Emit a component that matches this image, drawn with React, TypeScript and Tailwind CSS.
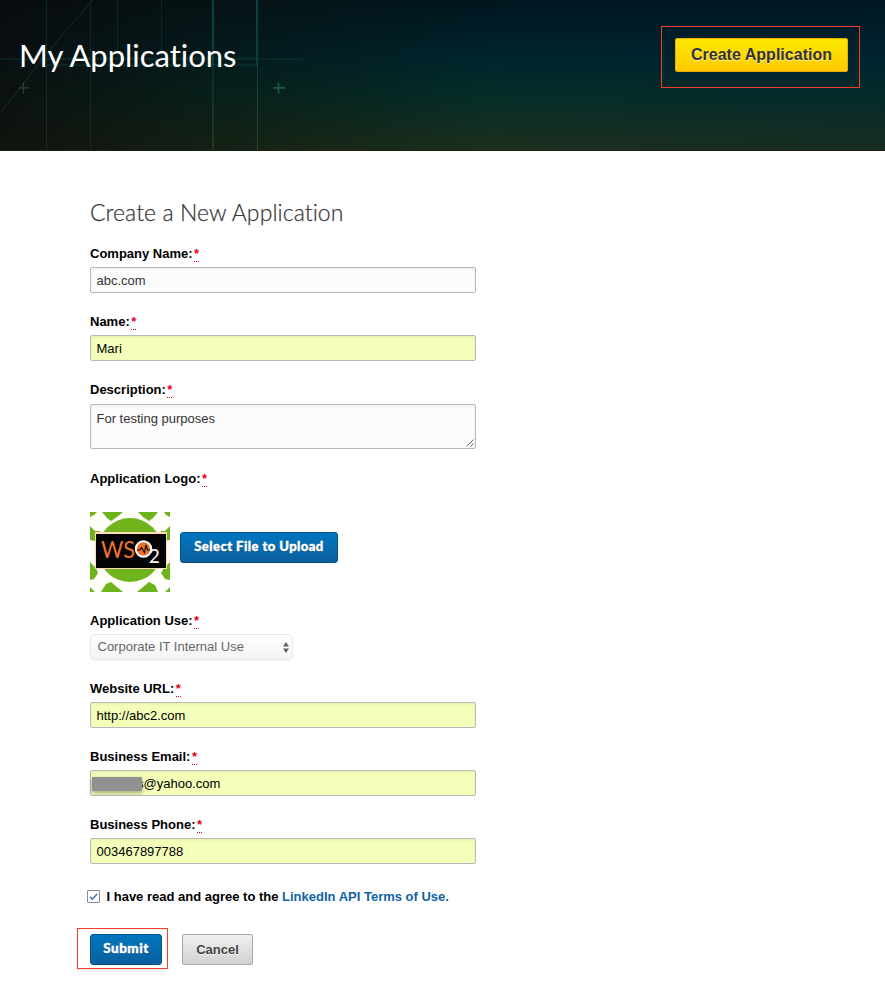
import type { ReactNode } from "react";

function HeaderArt() {
  return (
    <svg className="absolute inset-0 h-full w-full" viewBox="0 0 885 151" preserveAspectRatio="none" aria-hidden="true">
      <defs>
        <linearGradient id="rule" x1="0" y1="0" x2="0" y2="151" gradientUnits="userSpaceOnUse">
          <stop offset="0" stopColor="#064248" />
          <stop offset="0.45" stopColor="#0b4038" />
          <stop offset="1" stopColor="#264a2a" />
        </linearGradient>
        <linearGradient id="dim" x1="0" y1="0" x2="0" y2="151" gradientUnits="userSpaceOnUse">
          <stop offset="0" stopColor="#06272c" />
          <stop offset="1" stopColor="#1b2a1d" />
        </linearGradient>
      </defs>
      <g fill="url(#dim)">
        <rect x="46" y="0" width="1" height="151" />
        <rect x="90" y="0" width="1" height="151" />
        <rect x="117" y="0" width="1" height="60" />
        <rect x="161" y="0" width="1" height="60" />
      </g>
      <g fill="url(#rule)">
        <rect x="212" y="0" width="2" height="66" />
        <rect x="212" y="66" width="2" height="85" opacity="0.55" />
        <rect x="256" y="0" width="2" height="66" />
        <rect x="257" y="66" width="1" height="85" />
      </g>
      <rect x="0" y="59" width="302" height="1" fill="#0b3c38" opacity="0.8" />
      <rect x="46" y="58" width="212" height="1" fill="#0b4a42" opacity="0.45" />
      <rect x="46" y="65" width="212" height="1" fill="#0e423a" opacity="0.8" />
      <path d="M93 0 L53 46 L0 114" fill="none" stroke="#182c2a" strokeWidth="1" />
      <path d="M19 88.500H29M23.500 83V94" stroke="#23443a" strokeWidth="1.300" />
      <path d="M273.500 88.500H285M278.500 83V94" stroke="#1c5c48" strokeWidth="1.700" />
    </svg>
  );
}

function Label({ children }: { children: ReactNode }) {
  return (
    <div className="flex h-5 items-center whitespace-nowrap text-[13px] font-bold leading-5 text-black">
      <span>{children}</span>
      <span className="ml-[1.500px] h-[15px] border-b border-dotted border-[#e1001a] leading-[14px] text-[#e1001a]">*</span>
    </div>
  );
}

function TextField({ label, value, filled = false, masked = false }: { label: string; value: string; filled?: boolean; masked?: boolean }) {
  return (
    <div className="mb-[19px]">
      <Label>{label}</Label>
      <div
        className={`relative mt-[3px] flex h-[26px] items-center rounded-[2px] border border-[#b9b9b9] pl-[5.500px] pt-px text-[13px] shadow-[inset_0_1px_3px_rgba(0,0,0,0.07)] ${
          filled ? "bg-[#f4ffba] text-black" : "bg-[#fcfcfc] text-[#333]"
        }`}
      >
        {masked && <span className="absolute left-px top-[6px] h-[14px] w-[50px] bg-[#919191] shadow-[0_2px_4px_rgba(0,0,0,0.35)]" />}
        <span className={masked ? "ml-[40.500px]" : ""}>{value}</span>
      </div>
    </div>
  );
}

function AppLogo() {
  return (
    <svg className="h-20 w-20 shrink-0" viewBox="0 0 80 80" role="img" aria-label="WSO2">
      <rect width="80" height="80" fill="#fffef8" />
      <g fill="#6fb41c">
        <path d="M0 0H7L4 3L0 5Z M12 0H33L27 5L21 9L17 6Z M48 0H68L63 6L59 9L53 5Z M74 0H80V5L76 3Z" />
        <path d="M0 14L5 19L10 19V27L5 29L0 28Z M80 14L75 19H71V27L75 29L80 28Z" />
        <path d="M0 50L6 56L8 61L4 67L0 68Z M80 50L74 56L71 61L75 67L80 68Z" />
        <path d="M0 75L5 80H0Z M11 80L16 72L21 70L27 75L33 80Z M47 80L53 75L59 70L65 73L68 80Z M75 80L80 75V80Z" />
        <circle cx="40" cy="38" r="32" />
      </g>
      <rect x="5" y="20" width="72" height="37" fill="#ffd9b8" />
      <rect x="6" y="22" width="70" height="34" fill="#050304" />
      <text x="11" y="45.500" textLength="34" lengthAdjust="spacingAndGlyphs" className="fill-[#ed7430] font-['Lato',sans-serif] text-[24px]">WS</text>
      <circle cx="53.500" cy="37" r="7.700" fill="#e9712d" stroke="#fff" strokeWidth="2" />
      <path d="M47 38H50L51.500 35.500L54.500 40.500L56 33L57.500 38H60" fill="none" stroke="#161010" strokeWidth="1.200" />
      <text x="58.800" y="50.500" className="fill-white font-['Lato',sans-serif] text-[19px]">2</text>
    </svg>
  );
}

const blueButton =
  "flex h-[31px] items-center justify-center whitespace-nowrap rounded-[3px] border border-[#045188] bg-linear-to-b from-[#0077bf] to-[#0b5f9e] font-['Lato',sans-serif] font-black text-white [-webkit-text-stroke:0.4px_white] [text-shadow:0_1px_1px_rgba(0,0,0,0.3)]";

export default function App() {
  return (
    <div className="min-h-[986px] w-full bg-white font-['Liberation_Sans',Arial,sans-serif]">
      <header className="relative h-[151px] overflow-hidden border-b border-[#152018] bg-[linear-gradient(90deg,rgba(12,9,8,0.78)_0%,rgba(10,14,8,0.5)_24%,rgba(0,20,20,0.12)_55%,rgba(0,26,42,0.25)_100%),linear-gradient(180deg,#001620_0%,#002630_38%,#06302b_63%,#20331f_100%)]">
        <HeaderArt />
        <div className="relative flex items-start justify-between">
          <h1 className="ml-[19px] mt-[35px] whitespace-nowrap font-['Lato',sans-serif] text-[31px] font-normal leading-10 tracking-[-0.03px] text-white">
            My Applications
          </h1>
          <div className="mr-[25px] mt-[26px] flex h-[62px] w-[199px] items-start border border-[#f43d2b] pl-[13px] pt-[11px]">
            <button className="h-[34px] w-[173px] whitespace-nowrap rounded-[2px] border border-[#f2ac00] bg-linear-to-b from-[#fbe900] to-[#ffca00] text-[16px] font-bold leading-8 tracking-[0.02px] text-[#333] [text-shadow:0_1px_1px_rgba(255,255,255,0.65)]">
              Create Application
            </button>
          </div>
        </div>
      </header>

      <main className="ml-[90px] w-[386px] pt-[46px]">
        <h2 className="h-[47px] whitespace-nowrap font-['Lato',sans-serif] text-[23px] font-light leading-[30px] tracking-[0.07px] text-[#333] [-webkit-text-stroke:0.25px_#444]">
          Create a New Application
        </h2>
        <TextField label="Company Name:" value="abc.com" />
        <TextField label="Name:" value="Mari" filled />
        <Label>Description:</Label>
        <div className="relative mb-5 mt-1 h-[45px] rounded-[2px] border border-[#b9b9b9] bg-[#fcfcfc] pl-[5.500px] pt-1 text-[13px] leading-5 text-[#333] shadow-[inset_0_1px_3px_rgba(0,0,0,0.07)]">
          For testing purposes
          <svg className="absolute bottom-px right-px h-2 w-2" viewBox="0 0 8 8" aria-hidden="true">
            <path d="M0.500 7.500L7.500 0.500M4.500 7.500L7.500 4.500" stroke="#555" strokeWidth="0.900" />
          </svg>
        </div>

        <Label>Application Logo:</Label>
        <div className="mb-[19px] mt-[23px] flex h-20 items-start gap-[10px]">
          <AppLogo />
          <button className={`${blueButton} mt-5 w-[158px] text-[13px] tracking-[0.45px]`}>
            <span className="-mt-px">Select File to Upload</span>
          </button>
        </div>

        <Label>Application Use:</Label>
        <div className="mb-[19px] mt-[3px] flex h-[26px] w-[203px] items-center justify-between rounded-[5px] border border-[#e9e9e9] bg-linear-to-b from-white to-[#f4f4f4] pl-[6.500px] pr-[3px] text-[13px] text-[#666] shadow-[0_1px_1px_rgba(0,0,0,0.06)]">
          <span>Corporate IT Internal Use</span>
          <svg className="h-[11px] w-[6px]" viewBox="0 0 6 11" aria-hidden="true">
            <path d="M3 0L6 4.600H0ZM0 6.400H6L3 11Z" fill="#606060" />
          </svg>
        </div>

        <TextField label="Website URL:" value="http://abc2.com" filled />
        <TextField label="Business Email:" value="s@yahoo.com" filled masked />
        <TextField label="Business Phone:" value="003467897788" filled />

        <div className="-ml-[3px] mt-[22px] flex h-5 items-center whitespace-nowrap text-[13px] font-bold text-black">
          <span className="mr-[6.500px] flex h-[13px] w-[13px] items-center justify-center rounded-[1px] border border-[#8b8b8b] bg-white">
            <svg className="h-[9px] w-[9px]" viewBox="0 0 9 9" aria-hidden="true">
              <path d="M1 4.800L3.400 7.200L8.200 1.800" fill="none" stroke="#2f72b5" strokeWidth="1.300" />
            </svg>
          </span>
          <span className="pt-[2px]">
            I have read and agree to the <a className="text-[#0f63a3]">LinkedIn API Terms of Use.</a>
          </span>
        </div>

        <div className="-ml-[13px] mt-[22px] flex items-start gap-[14px]">
          <div className="flex h-[41px] w-[91px] items-start border border-[#f43d2b] pl-3 pt-[5px] shadow-[0_3px_5px_rgba(0,0,0,0.08)]">
            <button className={`${blueButton} w-[72px] text-[13.500px] tracking-[0.45px]`}>
              <span className="-mt-[3px]">Submit</span>
            </button>
          </div>
          <button className="mt-1.5 h-[31px] w-[71px] rounded-[2px] border border-[#a7a7a7] bg-linear-to-b from-[#f1f1f1] to-[#d1d1d1] text-[13px] font-bold text-[#444] [text-shadow:0_1px_0_rgba(255,255,255,0.6)]">
            Cancel
          </button>
        </div>
      </main>
    </div>
  );
}
